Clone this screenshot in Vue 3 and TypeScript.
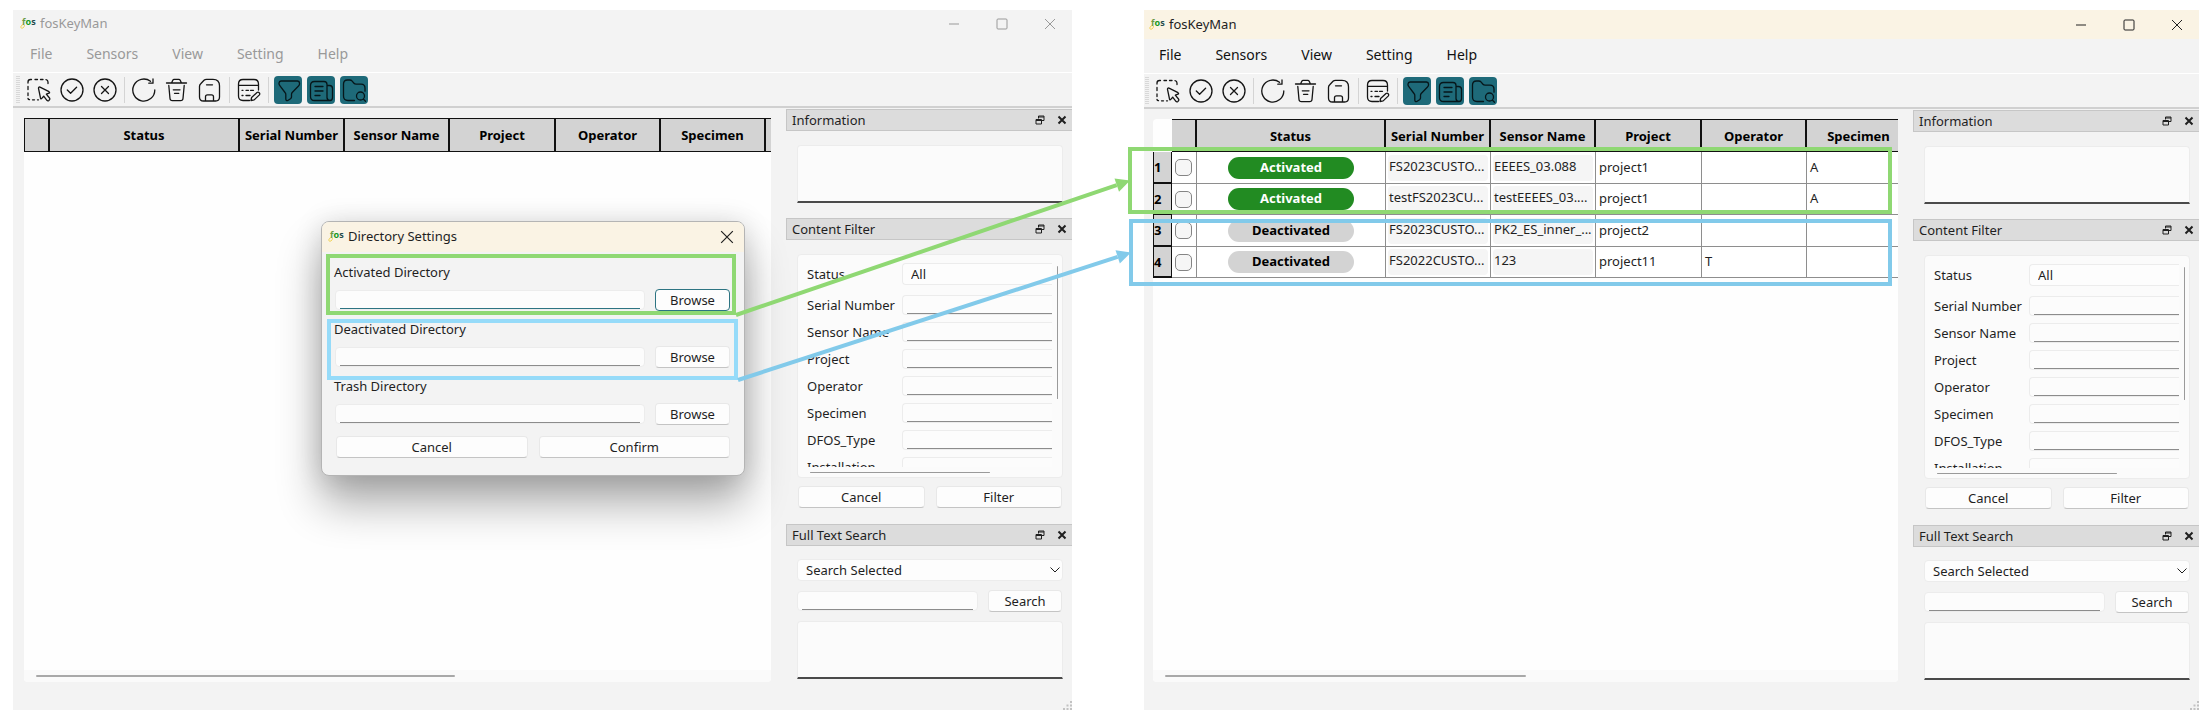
<script setup lang="ts">
import { nextTick, onBeforeUnmount, onMounted, ref } from 'vue'

interface TableRow {
  active: boolean
  serial: string
  name: string
  project: string
  operator: string
  specimen: string
}

interface AppWindow {
  id: string
  focused: boolean
  rows: TableRow[]
  scroll: number
}

interface Arrow {
  key: string
  x1: number
  y1: number
  x2: number
  y2: number
  head: string
}

const windows: AppWindow[] = [
  { id: 'before', focused: false, rows: [], scroll: 58 },
  {
    id: 'after',
    focused: true,
    scroll: 50,
    rows: [
      { active: true, serial: 'FS2023CUSTO...', name: 'EEEES_03.088', project: 'project1', operator: '', specimen: 'A' },
      { active: true, serial: 'testFS2023CU...', name: 'testEEEES_03....', project: 'project1', operator: '', specimen: 'A' },
      { active: false, serial: 'FS2023CUSTO...', name: 'PK2_ES_inner_...', project: 'project2', operator: '', specimen: '' },
      { active: false, serial: 'FS2022CUSTO...', name: '123', project: 'project11', operator: 'T', specimen: '' },
    ],
  },
]

const menus = ['File', 'Sensors', 'View', 'Setting', 'Help']
const columns = ['', 'Status', 'Serial Number', 'Sensor Name', 'Project', 'Operator', 'Specimen', '']
const filters = ['Serial Number', 'Sensor Name', 'Project', 'Operator', 'Specimen', 'DFOS_Type', 'Installation']
const directories = ['Activated', 'Deactivated', 'Trash']

interface Tool {
  label: string
  on?: boolean
  sep?: boolean
  d: string
}

const tools: Tool[] = [
  {
    label: 'Select',
    d: 'M3 7V6q0-2.500 2.500-2.500h1M10 3.500h2.500M15.500 3.500h2.500M21 3.700q2 .3 2 2.300v1.500M3 10.500v3M3 17v2.500M3 22.500q.2 1 1.500 1.200M7.500 23.800h2M12.500 23.800h1M13.500 12.300l2 9.700q.4 1.500 1.300.4l1.900-2.300 3.200 4.200q.9 1 2 .1l.6-.6q.8-.8 0-1.800l-3.200-3.800 2.700-1q1.200-.7 0-1.500l-9-4.600q-1.600-.5-1.500 1.200z',
  },
  { label: 'Activate', d: 'M3 14a11 11 0 1 0 22 0a11 11 0 1 0-22 0M9.300 14l3.300 3.300 6-6' },
  { label: 'Deactivate', d: 'M3 14a11 11 0 1 0 22 0a11 11 0 1 0-22 0M10.500 10.500l7 7M17.500 10.500l-7 7' },
  { label: 'Refresh', sep: true, d: 'M24.800 14A11 11 0 1 1 20.500 5.300M23 3v4.200h-4.200' },
  {
    label: 'Delete',
    d: 'M3.500 7h20M8.500 7l1.300-2.800q.4-.9 1.400-.9h4.600q1 0 1.400.9L18.500 7M5.800 9.500l1.200 13q.2 2.200 2.400 2.200h8.200q2.200 0 2.400-2.200l1.200-13M10.300 13.800h6.700M11.500 17.300h4.300',
  },
  {
    label: 'Save',
    d: 'M3.500 10.500q0-1.500 1-2.500l3.500-3.700q1-1 2.500-1h6.500q6.500 0 6.500 6.500v11.200q0 4-4 4h-12q-4 0-4-4zM9.500 24.800v-4q0-2 2-2h4q2 0 2 2v4M10.500 8.800h6',
  },
  {
    label: 'Edit list',
    sep: true,
    d: 'M14.500 24.500H8q-4.500 0-4.500-4.500V8q0-4.500 4.500-4.500h11q4.500 0 4.500 4.500v6M3.500 9.300h20M7 14.300h1M11 14.300h2.500M15.500 14.300h3M7 19.500h1M11 19.500h4M16 24.500l.6-3 5.400-5q1.200-.8 2.200.2 1 1 .2 2.200l-5.200 5z',
  },
  {
    label: 'Content filter',
    on: true,
    sep: true,
    d: 'M7 5h16.500q2 .2 2 2v1q0 1-1 2l-6.300 6.500q-.7.800-.7 2v2.500q0 1-1 1.700l-2.700 1.800q-1.800.6-2-1.500v-4.500q0-1.200-.8-2L6 9.800q-1-1-1-2V7q.2-1.800 2-2z',
  },
  {
    label: 'Information',
    on: true,
    d: 'M7.500 5.500h9.500q3 0 3 3v13q0 3 3 3h-15.500q-4 0-4-4v-11q0-4 4-4zM20 9.500h2.500q3 0 3 3v9q0 3-2.500 3t-3-3M8 10.500h8M8 15h8M8 19.500h5',
  },
  {
    label: 'Full text search',
    on: true,
    d: 'M14.500 24.500H8q-4.500 0-4.500-4.500V8q0-4 4-4h2.200q1.500 0 2.500 1.200l1.500 1.800q1 1.200 2.500 1.200h4.800q4 0 4 4v3M3.500 9.500v-1M16.500 20a4 4 0 1 0 8 0a4 4 0 1 0-8 0M23.300 23l2.200 2.300',
  },
]

const scene = ref<HTMLElement | null>(null)
const arrows = ref<Arrow[]>([])

function connect(key: string): Arrow | null {
  const root = scene.value
  const source = root?.querySelector(`[data-source="${key}"]`)
  const target = root?.querySelector(`[data-target="${key}"]`)
  if (!root || !source || !target) return null
  const o = root.getBoundingClientRect()
  const a = source.getBoundingClientRect()
  const b = target.getBoundingClientRect()
  const x1 = a.right - o.left
  const y1 = a.bottom - o.top
  const x2 = b.left - o.left + 2
  const y2 = (b.top + b.bottom) / 2 - o.top
  const len = Math.hypot(x2 - x1, y2 - y1)
  const ux = (x2 - x1) / len
  const uy = (y2 - y1) / len
  const bx = x2 - ux * 14
  const by = y2 - uy * 14
  const head = `${x2},${y2} ${bx - uy * 7},${by + ux * 7} ${bx + uy * 7},${by - ux * 7}`
  return { key, x1, y1, x2: bx, y2: by, head }
}

function layout(): void {
  arrows.value = ['activated', 'deactivated'].map(connect).filter((a): a is Arrow => a !== null)
}

onMounted(async () => {
  await nextTick()
  layout()
  window.addEventListener('resize', layout)
})
onBeforeUnmount(() => window.removeEventListener('resize', layout))
</script>

<template>
  <main ref="scene" class="scene">
    <section v-for="win in windows" :key="win.id" class="window" :class="{ focused: win.focused }">
      <header class="titlebar">
        <svg class="logo" viewBox="0 0 18 14" aria-hidden="true">
          <path d="M4 9q-3 1-3.300 3 .3 2 2.300 1 1.500-1 1.500-3" class="curl" />
          <text x="2" y="10"><tspan class="f">f</tspan><tspan class="o">o</tspan><tspan class="s">s</tspan></text>
        </svg>
        <span class="title">fosKeyMan</span>
        <div class="controls">
          <button type="button" aria-label="Minimize"><svg viewBox="0 0 12 12"><path d="M1 6h10" /></svg></button>
          <button type="button" aria-label="Maximize"><svg viewBox="0 0 12 12"><rect x="1" y="1" width="10" height="10" rx="1" /></svg></button>
          <button type="button" aria-label="Close"><svg viewBox="0 0 12 12"><path d="M1 1l10 10M11 1L1 11" /></svg></button>
        </div>
      </header>
      <nav class="menubar">
        <button v-for="m in menus" :key="m" type="button">{{ m }}</button>
      </nav>
      <div class="toolbar">
        <span class="handle"></span>
        <template v-for="t in tools" :key="t.label">
          <span v-if="t.sep" class="sep"></span>
          <button type="button" class="tool" :class="{ on: t.on }" :aria-label="t.label">
            <svg viewBox="0 0 28 28"><path :d="t.d" /></svg>
          </button>
        </template>
      </div>

      <div class="body">
        <div class="table-area">
          <div class="table-view">
            <div class="table-clip">
              <table :class="{ empty: !win.rows.length }">
                <colgroup>
                  <col v-if="win.rows.length" class="c-index" />
                  <col class="c-check" />
                  <col class="c-status" />
                  <col class="c-data" span="2" />
                  <col class="c-project" />
                  <col class="c-data" span="3" />
                </colgroup>
                <thead>
                  <tr>
                    <td v-if="win.rows.length" class="corner"></td>
                    <th v-for="(c, i) in columns" :key="i" scope="col">{{ c }}</th>
                  </tr>
                </thead>
                <tbody>
                  <tr v-for="(r, i) in win.rows" :key="i">
                    <th scope="row">{{ i + 1 }}</th>
                    <td class="check"><input type="checkbox" :aria-label="`Select row ${i + 1}`" /></td>
                    <td class="status">
                      <span class="pill" :class="{ active: r.active }">{{ r.active ? 'Activated' : 'Deactivated' }}</span>
                    </td>
                    <td class="locked"><span>{{ r.serial }}</span></td>
                    <td class="locked"><span>{{ r.name }}</span></td>
                    <td>{{ r.project }}</td>
                    <td>{{ r.operator }}</td>
                    <td>{{ r.specimen }}</td>
                    <td></td>
                  </tr>
                </tbody>
              </table>
            </div>
            <div class="hscroll"><span :style="{ width: win.scroll + '%' }"></span></div>
          </div>
          <template v-if="win.rows.length">
            <div class="mark mark-on" data-target="activated"></div>
            <div class="mark mark-off" data-target="deactivated"></div>
          </template>
        </div>

        <aside class="docks">
          <section class="dock">
            <header>
              <h2>Information</h2>
              <button type="button" aria-label="Float"><svg viewBox="0 0 10 10"><path d="M3.500 3.500V1h5.500v4.500H6.500M3.500 2h5.500M1 4.500h5.500V9H1zM1 5.500h5.500" /></svg></button>
              <button type="button" aria-label="Close panel"><svg viewBox="0 0 10 10" class="x"><path d="M1.500 1.500l7 7M8.500 1.500l-7 7" /></svg></button>
            </header>
            <div class="content info"><textarea aria-label="Information"></textarea></div>
          </section>

          <section class="dock">
            <header>
              <h2>Content Filter</h2>
              <button type="button" aria-label="Float"><svg viewBox="0 0 10 10"><path d="M3.500 3.500V1h5.500v4.500H6.500M3.500 2h5.500M1 4.500h5.500V9H1zM1 5.500h5.500" /></svg></button>
              <button type="button" aria-label="Close panel"><svg viewBox="0 0 10 10" class="x"><path d="M1.500 1.500l7 7M8.500 1.500l-7 7" /></svg></button>
            </header>
            <div class="content">
              <div class="filter-frame">
                <form class="filter-form">
                  <div class="field first">
                    <label :for="`${win.id}-status`">Status</label>
                    <select :id="`${win.id}-status`"><option>All</option></select>
                  </div>
                  <div v-for="f in filters" :key="f" class="field">
                    <label :for="`${win.id}-${f}`">{{ f }}</label>
                    <input :id="`${win.id}-${f}`" class="line" type="text" />
                  </div>
                </form>
                <span class="vbar"></span>
                <span class="hbar"></span>
              </div>
              <div class="pair">
                <button type="button" class="btn">Cancel</button>
                <button type="button" class="btn">Filter</button>
              </div>
            </div>
          </section>

          <section class="dock">
            <header>
              <h2>Full Text Search</h2>
              <button type="button" aria-label="Float"><svg viewBox="0 0 10 10"><path d="M3.500 3.500V1h5.500v4.500H6.500M3.500 2h5.500M1 4.500h5.500V9H1zM1 5.500h5.500" /></svg></button>
              <button type="button" aria-label="Close panel"><svg viewBox="0 0 10 10" class="x"><path d="M1.500 1.500l7 7M8.500 1.500l-7 7" /></svg></button>
            </header>
            <div class="content search">
              <div class="combo">
                <select aria-label="Search scope"><option>Search Selected</option></select>
                <svg viewBox="0 0 10 6"><path d="M.5.500L5 5 9.500.500" /></svg>
              </div>
              <div class="search-row">
                <input class="line" type="text" aria-label="Search text" />
                <button type="button" class="btn">Search</button>
              </div>
              <textarea aria-label="Search results"></textarea>
            </div>
          </section>
        </aside>
      </div>
      <footer class="statusbar">
        <svg viewBox="0 0 9 9"><path d="M7 0h2v2H7zM7 3.500h2v2H7zM3.500 3.500h2v2h-2zM7 7h2v2H7zM3.500 7h2v2h-2zM0 7h2v2H0z" /></svg>
      </footer>

      <div v-if="!win.focused" class="dialog" role="dialog" aria-label="Directory Settings">
        <header class="dialog-title">
          <svg class="logo" viewBox="0 0 18 14" aria-hidden="true">
            <path d="M4 9q-3 1-3.300 3 .3 2 2.300 1 1.500-1 1.500-3" class="curl" />
            <text x="2" y="10"><tspan class="f">f</tspan><tspan class="o">o</tspan><tspan class="s">s</tspan></text>
          </svg>
          <span class="title">Directory Settings</span>
          <button type="button" aria-label="Close"><svg viewBox="0 0 12 12"><path d="M1 1l10 10M11 1L1 11" /></svg></button>
        </header>
        <div class="dialog-body">
          <div v-for="(d, i) in directories" :key="d" class="directory">
            <label :for="`dir-${d}`">{{ d }} Directory</label>
            <div class="directory-row">
              <input :id="`dir-${d}`" class="line" :class="{ accent: i === 0 }" type="text" />
              <button type="button" class="btn" :class="{ current: i === 0 }">Browse</button>
            </div>
          </div>
          <div class="pair">
            <button type="button" class="btn">Cancel</button>
            <button type="button" class="btn">Confirm</button>
          </div>
        </div>
        <div class="mark src-on" data-source="activated"></div>
        <div class="mark src-off" data-source="deactivated"></div>
      </div>
    </section>

    <svg class="arrows" aria-hidden="true">
      <g v-for="a in arrows" :key="a.key" :class="a.key">
        <line :x1="a.x1" :y1="a.y1" :x2="a.x2" :y2="a.y2" />
        <polygon :points="a.head" />
      </g>
    </svg>
  </main>
</template>

<style>
body {
  margin: 0;
  background: #fff;
}
</style>

<style scoped>
.scene,
.scene * {
  box-sizing: border-box;
}
.scene {
  position: relative;
  display: flex;
  gap: 72px;
  min-height: 100vh;
  padding: 10px 7px 12px 13px;
  font-family: 'Noto Sans', 'Open Sans', sans-serif;
  font-size: 13px;
  line-height: 20px;
  color: #1f1f1f;
}
button,
input,
select,
textarea {
  margin: 0;
  padding: 0;
  border: 0;
  background: none;
  font: inherit;
  color: inherit;
  outline: none;
  border-radius: 0;
}
svg {
  display: block;
  fill: none;
  stroke: currentColor;
}
h2 {
  margin: 0;
  font: inherit;
}
.window {
  position: relative;
  flex: 1 1 4px;
  min-width: 0;
  display: flex;
  flex-direction: column;
  padding-left: 2px;
  background: #f3f3f3;
}
.window.focused {
  flex-basis: 0;
  padding-left: 0;
}

/* title bar, menu, toolbar */
.titlebar {
  display: flex;
  align-items: center;
  height: 28px;
  padding-left: 5px;
  color: #999;
}
.focused .titlebar {
  height: 29px;
  background: #faf3e4;
  color: #222;
}
.logo {
  width: 18px;
  height: 14px;
  margin: 0 2px 4px 0;
  overflow: visible;
  stroke: none;
}
.logo text {
  font: bold 9px 'Noto Sans', sans-serif;
}
.logo .curl {
  fill: none;
  stroke: #f2d45c;
}
.logo .f {
  fill: #6b9a45;
}
.logo .o {
  fill: #149a1c;
}
.logo .s {
  fill: #244a4c;
}
.title {
  flex: 1;
  padding-bottom: 2px;
}
.controls {
  display: flex;
  gap: 4px;
}
.controls button {
  display: grid;
  place-items: center;
  width: 44px;
  height: 26px;
}
.controls svg {
  width: 12px;
  height: 12px;
}
.menubar {
  display: flex;
  align-items: center;
  gap: 34px;
  height: 34px;
  padding: 0 0 2px 15px;
  font-size: 14px;
  color: #999;
}
.focused .menubar {
  color: #111;
}
.toolbar {
  display: flex;
  align-items: center;
  gap: 5px;
  height: 36px;
  margin-left: -2px;
  padding-left: 3px;
  border-top: 1px solid #fff;
  border-bottom: 2px solid #d0d0d0;
}
.focused .toolbar {
  margin-left: 0;
  padding-left: 1px;
}
.handle {
  width: 4px;
  height: 28px;
  background: repeating-linear-gradient(#d8d8d8 0 1px, #f3f3f3 1px 2px);
}
.sep {
  width: 1px;
  height: 26px;
  background: #d4d4d4;
}
.tool {
  width: 28px;
  height: 28px;
  border-radius: 4px;
  color: #151515;
}
.tool svg {
  width: 28px;
  height: 28px;
  stroke-width: 1.3;
  stroke-linecap: round;
  stroke-linejoin: round;
}
.tool.on {
  background: #1e6a79;
  color: #06161a;
}

/* main area */
.body {
  flex: 1;
  display: flex;
}
.table-area {
  position: relative;
  flex: 1;
  min-width: 0;
  display: flex;
  padding: 10px 15px 0 9px;
}
.table-view {
  flex: 1;
  min-width: 0;
  display: flex;
  flex-direction: column;
  border-radius: 4px;
  background: #fefefe;
}
.table-clip {
  flex: 1;
  overflow: hidden;
}
table {
  width: 864px;
  table-layout: fixed;
  border-collapse: separate;
  border-spacing: 0;
}
table.empty {
  width: 847px;
}
.c-index {
  width: 19px;
}
.c-check {
  width: 25px;
}
.c-status {
  width: 189px;
}
.c-data {
  width: 105px;
}
.c-project {
  width: 106px;
}
.empty .c-check {
  width: 26px;
}
.empty .c-status {
  width: 190px;
}
th {
  padding: 0;
  font-weight: 700;
  color: #000;
  background: #d3d3d3;
}
thead th {
  height: 34px;
  border: solid #111;
  border-width: 1px 2px 1px 0;
}
.focused thead th {
  height: 33px;
}
.empty thead th:first-child {
  border-left-width: 1px;
}
tbody th {
  border: 1px solid #111;
  border-width: 0 1px 2px;
  text-align: left;
}
tbody td {
  height: 32px;
  padding: 0 3px 2px;
  border: solid #8e8e8e;
  border-width: 0 1px 1px 0;
  background: #fff;
  white-space: nowrap;
}
tbody tr:nth-child(even) td {
  height: 31px;
}
.corner {
  padding: 0;
}
tbody td.check {
  padding: 0 3px;
}
.check input {
  display: block;
  appearance: none;
  width: 17px;
  height: 17px;
  border: 1px solid #858585;
  border-radius: 5px;
  background: #f6f6f6;
}
tbody td.status {
  padding: 0;
}
.pill {
  display: block;
  width: 126px;
  height: 22px;
  margin: 0 auto;
  border-radius: 11px;
  background: #d3d3d3;
  font-weight: 700;
  text-align: center;
  color: #000;
}
.pill.active {
  background: #228b22;
  color: #fff;
}
tbody td.locked {
  padding: 2px;
}
.locked span {
  display: block;
  height: 26px;
  padding: 1px;
  border-radius: 4px;
  background: #f5f5f5;
  overflow: hidden;
}
.hscroll {
  height: 12px;
  padding: 5px 12px;
  border-radius: 0 0 4px 4px;
  background: #fafafa;
}
.hscroll span {
  display: block;
  height: 2px;
  border-radius: 1px;
  background: #a8a8a8;
}

/* docks */
.docks {
  width: 286px;
  padding-top: 1px;
}
.dock > header {
  display: flex;
  align-items: center;
  height: 22px;
  padding: 0 5px;
  border: solid #c6c6c6;
  border-width: 1px 0 1px 1px;
  background: #dcdcdc;
}
.dock h2 {
  flex: 1;
}
.dock > header button {
  display: grid;
  place-items: center;
  width: 10px;
  height: 18px;
  margin-left: 12px;
}
.dock > header svg {
  width: 10px;
  height: 10px;
}
.dock > header .x {
  stroke-width: 2;
}
.content {
  padding: 14px 9px 16px 11px;
}
.content.info {
  padding-bottom: 15px;
}
textarea {
  display: block;
  width: 100%;
  height: 58px;
  border: 1px solid #ececec;
  border-bottom: 2px solid #4a4a4a;
  border-radius: 4px 4px 0 0;
  background: #fbfbfb;
  resize: none;
}
.filter-frame {
  position: relative;
  height: 224px;
  padding: 8px 10px 10px 9px;
  border: 1px solid #ececec;
  border-radius: 4px;
  background: #fbfbfb;
}
.filter-form {
  height: 204px;
  overflow: hidden;
}
.field {
  display: grid;
  grid-template-columns: 95px 1fr;
  align-items: center;
  height: 20px;
  margin-bottom: 7px;
}
.field.first {
  height: 22px;
  margin-bottom: 10px;
}
.field .line,
.field select {
  border-right: 0;
  border-radius: 4px 0 0 4px;
}
select {
  appearance: none;
  height: 22px;
  padding-left: 8px;
  border: 1px solid #ececec;
  border-radius: 4px;
  background: #fdfdfd;
}
.line {
  min-width: 0;
  height: 20px;
  border: 1px solid #ececec;
  border-radius: 4px;
  background:
    linear-gradient(#8c8c8c, #8c8c8c) 50% 100% / calc(100% - 8px) 1px no-repeat,
    #fcfcfc;
}
.field .line {
  background:
    linear-gradient(#8c8c8c, #8c8c8c) 100% 100% / calc(100% - 4px) 1px no-repeat,
    #fcfcfc;
}
.vbar,
.hbar {
  position: absolute;
  border-radius: 1px;
  background: #9a9a9a;
}
.vbar {
  top: 11px;
  right: 4px;
  width: 1px;
  height: 60%;
}
.hbar {
  left: 12px;
  bottom: 4px;
  width: 68%;
  height: 1px;
}
.pair {
  display: grid;
  grid-template-columns: 1fr 1fr;
  gap: 11px;
}
.content .pair {
  padding: 8px 1px 0;
}
.btn {
  height: 22px;
  border: 1px solid #e8e8e8;
  border-bottom-color: #c4c4c4;
  border-radius: 4px;
  background: #fdfdfd;
  line-height: 18px;
}
.btn.current {
  border: 1px solid #2d7482;
}
.content.search {
  display: flex;
  flex-direction: column;
  gap: 9px;
  padding-top: 13px;
  padding-bottom: 0;
}
.combo {
  position: relative;
}
.combo select {
  display: block;
  width: 100%;
}
.combo svg {
  position: absolute;
  right: 3px;
  top: 8px;
  width: 10px;
  height: 6px;
  pointer-events: none;
}
.search-row {
  display: grid;
  grid-template-columns: 1fr 74px;
  gap: 10px;
  align-items: center;
  padding-right: 1px;
}
.statusbar {
  display: flex;
  justify-content: flex-end;
  align-items: flex-end;
  height: 28px;
}
.statusbar svg {
  width: 9px;
  height: 9px;
  fill: #c2c2c2;
  stroke: none;
}

/* dialog */
.dialog {
  position: absolute;
  top: 211px;
  left: 308px;
  width: 424px;
  border: 1px solid #b4b4b4;
  border-radius: 8px;
  background: #f3f3f3;
  box-shadow:
    0 28px 44px rgba(0, 0, 0, 0.32),
    0 2px 28px rgba(0, 0, 0, 0.14);
}
.dialog-title {
  display: flex;
  align-items: center;
  height: 30px;
  padding: 0 10px 0 6px;
  border-radius: 7px 7px 0 0;
  background: #faf3e4;
}
.dialog-title button svg {
  width: 14px;
  height: 14px;
}
.dialog-body {
  padding: 10px 14px 17px 12px;
}
.directory {
  margin-bottom: 8px;
}
.directory label {
  display: block;
  height: 20px;
}
.directory-row {
  display: grid;
  grid-template-columns: 1fr 75px;
  gap: 10px;
  align-items: center;
  margin-top: 7px;
}
.directory-row .line {
  margin-left: 1px;
}
.line.accent {
  background:
    linear-gradient(#2d7482, #2d7482) 50% 100% / calc(100% - 8px) 1px no-repeat,
    #fcfcfc;
}
.dialog .pair {
  margin: 11px 0 0 2px;
}

/* callouts */
.mark {
  position: absolute;
  border: 4px solid #8fd873;
  pointer-events: none;
}
.mark-on {
  top: 38px;
  left: -16px;
  right: 21px;
  height: 67px;
}
.mark-off {
  top: 110px;
  left: -15px;
  right: 21px;
  height: 67px;
  border-color: #82caea;
}
.src-on {
  top: 32px;
  left: 4px;
  right: 8px;
  height: 61px;
}
.src-off {
  top: 97px;
  left: 5px;
  right: 6px;
  height: 61px;
  border-color: #96dbf9;
}
.arrows {
  position: absolute;
  inset: 0;
  width: 100%;
  height: 100%;
  pointer-events: none;
  stroke-width: 4;
}
.activated {
  stroke: #8fd873;
  fill: #8fd873;
}
.deactivated {
  stroke: #82caea;
  fill: #82caea;
}
.arrows polygon {
  stroke: none;
}
</style>
